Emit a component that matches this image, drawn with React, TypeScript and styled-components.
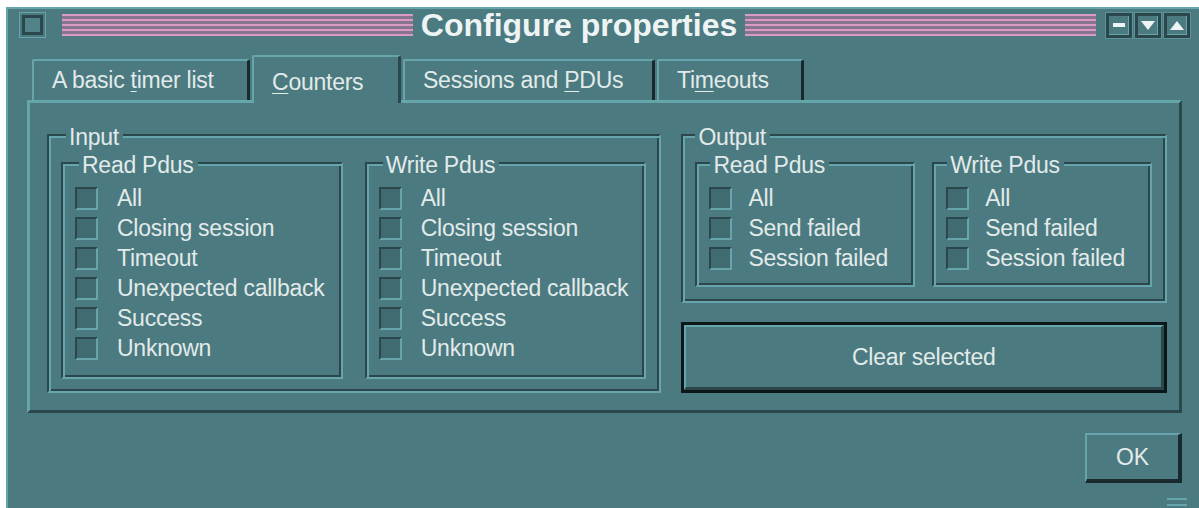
import styled, { createGlobalStyle } from "styled-components";

const BG = "#4b7a80";
const HI = "#66a5ac";
const LO = "#2b474b";
const DARK = "#182a2d";
const TEXT = "#e2eaea";
const PINK = "#d99bc6";
const MAUVE = "#87758e";

const GlobalStyle = createGlobalStyle`
  html, body {
    margin: 0;
    background: #ffffff;
    overflow: hidden;
  }
  body {
    font-family: "Liberation Sans", Arial, sans-serif;
  }
`;

const Window = styled.div`
  position: relative;
  margin: 7px 0 0 6px;
  width: 1193px;
  height: 501px;
  box-sizing: border-box;
  background: ${BG};
  border-top: 2px solid ${HI};
  border-left: 2px solid ${HI};
  display: flex;
  flex-direction: column;
  color: ${TEXT};
  font-size: 23px;
  letter-spacing: -0.25px;
`;

const TitleBar = styled.div`
  display: flex;
  align-items: center;
  height: 26px;
  padding: 3px 9px 0 11px;
`;

const MenuBox = styled.div`
  width: 27px;
  height: 26px;
  box-sizing: border-box;
  border: 1px solid ${HI};
  background: ${BG};
  display: flex;
  align-items: center;
  justify-content: center;
`;

const MenuInner = styled.div`
  width: 21px;
  height: 20px;
  box-sizing: border-box;
  border: 3px solid ${LO};
  background: #528389;
`;

const Stripes = styled.div<{ $left: number; $right: number }>`
  flex: 1;
  height: 22px;
  margin: 0 ${(p) => p.$right}px 0 ${(p) => p.$left}px;
  background: repeating-linear-gradient(
    to bottom,
    ${PINK} 0px,
    ${PINK} 2px,
    ${MAUVE} 2px,
    ${MAUVE} 5px
  );
`;

const Title = styled.div`
  font-size: 32px;
  font-weight: bold;
  line-height: 26px;
  letter-spacing: 0;
  color: #eef4f4;
  white-space: nowrap;
`;

const WinButtons = styled.div`
  display: flex;
  gap: 3px;
`;

const WinButton = styled.div`
  width: 26px;
  height: 25px;
  box-sizing: border-box;
  border: 3px solid ${LO};
  background: ${BG};
  box-shadow: inset -1px -1px 0 ${HI}, 0 0 0 1px #5a939a;
  display: flex;
  align-items: center;
  justify-content: center;
`;

const Notebook = styled.div`
  margin: 17px 0 0 19px;
  width: 1155px;
  display: flex;
  flex-direction: column;
`;

const TabRow = styled.div`
  display: flex;
  align-items: flex-end;
  height: 45px;
  padding-left: 5px;
`;

const Tab = styled.div<{ $width: number; $active?: boolean }>`
  position: relative;
  z-index: ${(p) => (p.$active ? 2 : 1)};
  width: ${(p) => p.$width}px;
  height: ${(p) => (p.$active ? 48 : 41)}px;
  margin-bottom: ${(p) => (p.$active ? -3 : 0)}px;
  margin-right: 2px;
  box-sizing: border-box;
  background: ${BG};
  border-top: 2px solid ${HI};
  border-left: 2px solid ${HI};
  border-right: 3px solid ${(p) => (p.$active ? LO : DARK)};
  border-top-left-radius: 2px;
  border-top-right-radius: 2px;
  padding: ${(p) => (p.$active ? "4px" : "0")} 0 0 18px;
  display: flex;
  align-items: center;
  white-space: nowrap;
`;

const Mnemonic = styled.span`
  text-decoration: underline;
  text-underline-offset: 3px;
  text-decoration-thickness: 1px;
`;

const Panel = styled.div`
  height: 313px;
  box-sizing: border-box;
  border-top: 3px solid ${HI};
  border-left: 3px solid ${HI};
  border-bottom: 3px solid ${LO};
  border-right: 3px solid ${LO};
  padding: 31px 12px 17px 17px;
  display: flex;
  gap: 20px;
`;

const Frame = styled.div<{ $pad: string; $gap?: number }>`
  position: relative;
  box-sizing: border-box;
  border: 2px solid;
  border-color: ${LO} ${HI} ${HI} ${LO};
  box-shadow: inset 2px 2px 0 ${HI}, inset -2px -2px 0 ${LO};
  padding: ${(p) => p.$pad};
  display: flex;
  gap: ${(p) => p.$gap ?? 0}px;
`;

const InputFrame = styled(Frame)`
  width: 615px;
`;

const RightColumn = styled.div`
  width: 486px;
  display: flex;
  flex-direction: column;
  gap: 19px;
`;

const OutputFrame = styled(Frame)`
  height: 169px;
`;

const SubFrame = styled(Frame)`
  flex: 1;
  flex-direction: column;
  gap: 7px;
`;

const Legend = styled.span<{ $left: number }>`
  position: absolute;
  top: -10px;
  left: ${(p) => p.$left}px;
  padding: 0 4px 0 3px;
  background: ${BG};
  line-height: 23px;
  white-space: nowrap;
`;

const Row = styled.label<{ $gap: number }>`
  display: flex;
  align-items: center;
  gap: ${(p) => p.$gap}px;
  height: 23px;
  white-space: nowrap;
`;

const Box = styled.span`
  width: 23px;
  height: 23px;
  flex: none;
  box-sizing: border-box;
  border: 2px solid;
  border-color: ${LO} ${HI} ${HI} ${LO};
  background: #406c71;
`;

const ClearOuter = styled.div`
  flex: 1;
  box-sizing: border-box;
  border: 3px solid #0c1719;
  display: flex;
`;

const RaisedButton = styled.div`
  flex: 1;
  box-sizing: border-box;
  border-top: 2px solid ${HI};
  border-left: 2px solid ${HI};
  border-bottom: 3px solid ${LO};
  border-right: 3px solid ${LO};
  display: flex;
  align-items: center;
  justify-content: center;
  background: ${BG};
`;

const Footer = styled.div`
  display: flex;
  justify-content: flex-end;
  padding: 20px 17px 0 0;
`;

const OkButton = styled(RaisedButton)`
  flex: none;
  width: 97px;
  height: 50px;
  border-bottom-width: 4px;
  border-right-width: 4px;
  border-bottom-color: ${DARK};
  border-right-color: ${DARK};
  letter-spacing: 0;
`;

const Grip = styled.div`
  position: absolute;
  right: 12px;
  bottom: 2px;
  width: 20px;
  height: 8px;
  border-top: 2px solid ${HI};
  border-bottom: 2px solid ${HI};
  box-sizing: border-box;
`;

const inputRows = [
  "All",
  "Closing session",
  "Timeout",
  "Unexpected callback",
  "Success",
  "Unknown",
];
const outputRows = ["All", "Send failed", "Session failed"];

const Check = ({ label, gap }: { label: string; gap: number }) => (
  <Row $gap={gap}>
    <Box />
    {label}
  </Row>
);

const Group = ({
  title,
  rows,
  legendLeft,
  gap,
}: {
  title: string;
  rows: string[];
  legendLeft: number;
  gap: number;
}) => (
  <SubFrame $pad="23px 8px 4px 12px">
    <Legend $left={legendLeft}>{title}</Legend>
    {rows.map((r) => (
      <Check label={r} gap={gap} key={r} />
    ))}
  </SubFrame>
);

export default function App() {
  return (
    <>
      <GlobalStyle />
      <Window>
        <TitleBar>
          <MenuBox>
            <MenuInner />
          </MenuBox>
          <Stripes $left={16} $right={8} />
          <Title>Configure properties</Title>
          <Stripes $left={8} $right={10} />
          <WinButtons>
            <WinButton>
              <svg width="12" height="5" viewBox="0 0 12 5">
                <rect x="0" y="0" width="12" height="4" fill="#eef4f4" />
              </svg>
            </WinButton>
            <WinButton>
              <svg width="14" height="9" viewBox="0 0 14 9">
                <polygon points="0,0 14,0 7,9" fill="#eef4f4" />
              </svg>
            </WinButton>
            <WinButton>
              <svg width="14" height="9" viewBox="0 0 14 9">
                <polygon points="0,9 14,9 7,0" fill="#eef4f4" />
              </svg>
            </WinButton>
          </WinButtons>
        </TitleBar>

        <Notebook>
          <TabRow>
            <Tab $width={218}>
              A basic&nbsp;<Mnemonic>t</Mnemonic>imer list
            </Tab>
            <Tab $width={149} $active>
              <Mnemonic>C</Mnemonic>ounters
            </Tab>
            <Tab $width={252}>
              Sessions and&nbsp;<Mnemonic>P</Mnemonic>DUs
            </Tab>
            <Tab $width={147}>
              Ti<Mnemonic>m</Mnemonic>eouts
            </Tab>
          </TabRow>
          <Panel>
            <InputFrame $pad="26px 13px 12px 12px" $gap={22}>
              <Legend $left={17}>Input</Legend>
              <Group title="Read Pdus" rows={inputRows} legendLeft={16} gap={19} />
              <Group title="Write Pdus" rows={inputRows} legendLeft={16} gap={19} />
            </InputFrame>
            <RightColumn>
              <OutputFrame $pad="26px 13px 14px 12px" $gap={17}>
                <Legend $left={12}>Output</Legend>
                <Group title="Read Pdus" rows={outputRows} legendLeft={13} gap={16} />
                <Group title="Write Pdus" rows={outputRows} legendLeft={13} gap={16} />
              </OutputFrame>
              <ClearOuter>
                <RaisedButton>Clear selected</RaisedButton>
              </ClearOuter>
            </RightColumn>
          </Panel>
        </Notebook>

        <Footer>
          <OkButton>OK</OkButton>
        </Footer>
        <Grip />
      </Window>
    </>
  );
}
